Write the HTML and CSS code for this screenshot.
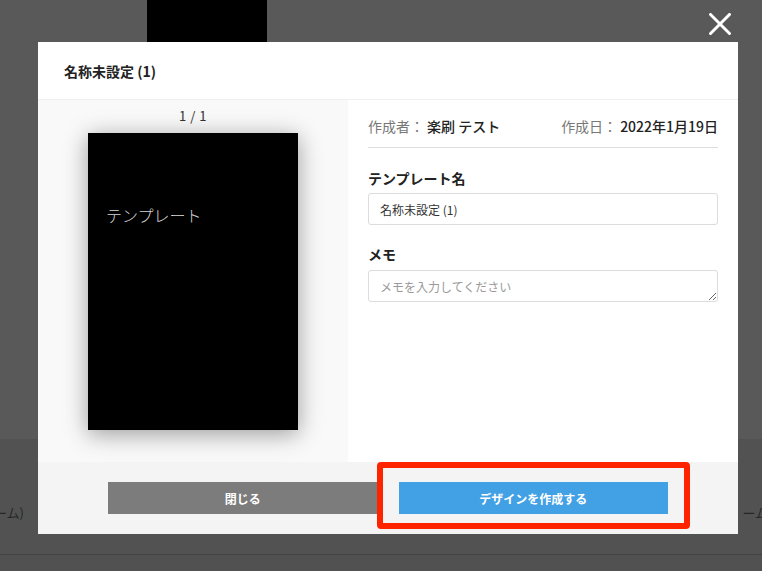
FILE: index.html
```html
<!DOCTYPE html>
<html lang="ja">
<head>
<meta charset="utf-8">
<title>テンプレート</title>
<link rel="stylesheet" href="styles.css">
</head>
<body>
<div class="page">
  <div class="page-top">
    <div class="thumb"></div>
  </div>
  <div class="page-band">
    <span class="band-left">ーム)</span>
    <span class="band-right">ーム</span>
  </div>
  <div class="page-bottom"></div>
</div>

<svg class="close" width="22" height="22" viewBox="0 0 22 22" aria-label="閉じる">
  <path d="M1.5 1.5 L20.5 20.5 M20.5 1.5 L1.5 20.5" stroke="#fff" stroke-width="3" stroke-linecap="square" fill="none"/>
</svg>

<div class="modal">
  <div class="modal-header">名称未設定 (1)</div>
  <div class="modal-body">
    <div class="preview">
      <div class="pager">1 / 1</div>
      <div class="sheet">
        <span class="sheet-text">テンプレート</span>
      </div>
    </div>
    <div class="form">
      <div class="meta">
        <div class="meta-item"><span class="meta-key">作成者：</span><span class="meta-val">楽刷 テスト</span></div>
        <div class="meta-item"><span class="meta-key">作成日：</span><span class="meta-val">2022年1月19日</span></div>
      </div>
      <label class="field-label label-first">テンプレート名</label>
      <input class="input" type="text" value="名称未設定 (1)">
      <label class="field-label">メモ</label>
      <textarea class="textarea" rows="1" placeholder="メモを入力してください"></textarea>
    </div>
  </div>
  <div class="modal-footer">
    <button class="btn btn-close">閉じる</button>
    <button class="btn btn-create">デザインを作成する</button>
  </div>
  <div class="highlight"></div>
</div>
</body>
</html>
```

FILE: styles.css
```css
* { box-sizing: border-box; }
html, body {
  margin: 0;
  padding: 0;
  width: 762px;
  height: 571px;
  overflow: hidden;
  background: #595959;
  font-family: "Noto Sans CJK JP", "Noto Sans", sans-serif;
}
.page {
  display: flex;
  flex-direction: column;
  height: 571px;
}
.page-top {
  height: 439px;
  background: #595959;
}
.thumb {
  margin-left: 147px;
  width: 120px;
  height: 42px;
  background: #000;
}
.page-band {
  height: 116px;
  background: #515251;
  border-bottom: 1px solid #434343;
  display: flex;
  justify-content: space-between;
  align-items: flex-start;
  padding-top: 64px;
  font-size: 13px;
  color: #262626;
  overflow: hidden;
}
.band-left { margin-left: -6px; }
.band-right { margin-right: -6px; }
.page-bottom {
  flex: 1;
  background: #515151;
}

.close {
  position: absolute;
  left: 709px;
  top: 13px;
}

.modal {
  position: absolute;
  left: 38px;
  top: 42px;
  width: 700px;
  height: 492px;
  background: #fff;
  display: flex;
  flex-direction: column;
}
.modal-header {
  height: 58px;
  border-bottom: 1px solid #efefef;
  padding-left: 26px;
  display: flex;
  align-items: center;
  font-size: 14px;
  font-weight: 700;
  color: #222;
}
.modal-body {
  height: 362px;
  display: flex;
}
.preview {
  width: 310px;
  background: #f9f9f9;
  display: flex;
  flex-direction: column;
  align-items: center;
  padding-top: 6px;
}
.pager {
  font-size: 13px;
  line-height: 20px;
  color: #333;
  letter-spacing: 0.5px;
}
.sheet {
  position: relative;
  margin-top: 7px;
  width: 210px;
  height: 297px;
  background: #000;
  box-shadow: 0 4px 22px rgba(0, 0, 0, 0.38);
}
.sheet-text {
  position: absolute;
  left: 18px;
  top: 70px;
  font-size: 16px;
  font-weight: 300;
  color: #d8d8d8;
  white-space: nowrap;
}
.form {
  flex: 1;
  padding: 16px 20px 0 20px;
  display: flex;
  flex-direction: column;
}
.meta {
  display: flex;
  justify-content: space-between;
  font-size: 14px;
  line-height: 20px;
  padding-bottom: 11px;
  border-bottom: 1px solid #dedede;
}
.meta-key { color: #777; }
.meta-val { color: #222; font-weight: 500; margin-left: 3px; }
.field-label {
  display: block;
  margin-top: 19px;
  margin-bottom: 5px;
  font-size: 14px;
  line-height: 20px;
  font-weight: 700;
  color: #222;
}
.label-first { margin-top: 20px; }
.input, .textarea {
  width: 100%;
  height: 32px;
  border: 1px solid #dcdcdc;
  border-radius: 3px;
  padding: 0 11px;
  font-family: inherit;
  font-size: 12px;
  color: #333;
  background: #fff;
  outline: none;
}
.textarea {
  display: block;
  margin-top: 1px;
  height: 32px;
  padding: 8px 11px 0;
  line-height: 16px;
  resize: vertical;
}
.textarea::placeholder { color: #9a9a9a; }
.modal-footer {
  flex: 1;
  background: #f4f4f4;
  display: flex;
  gap: 21px;
  padding: 20px 70px 0;
  align-items: flex-start;
}
.btn {
  flex: 1;
  height: 32px;
  border: none;
  border-radius: 0;
  font-family: inherit;
  font-size: 12px;
  font-weight: 700;
  color: #fff;
  cursor: pointer;
}
.btn-close { background: #7b7c7b; }
.btn-create { background: #42a0e5; }
.highlight {
  position: absolute;
  left: 339px;
  top: 420px;
  width: 313px;
  height: 67px;
  border: 6px solid #ff2400;
  border-radius: 4px;
  pointer-events: none;
}
```
